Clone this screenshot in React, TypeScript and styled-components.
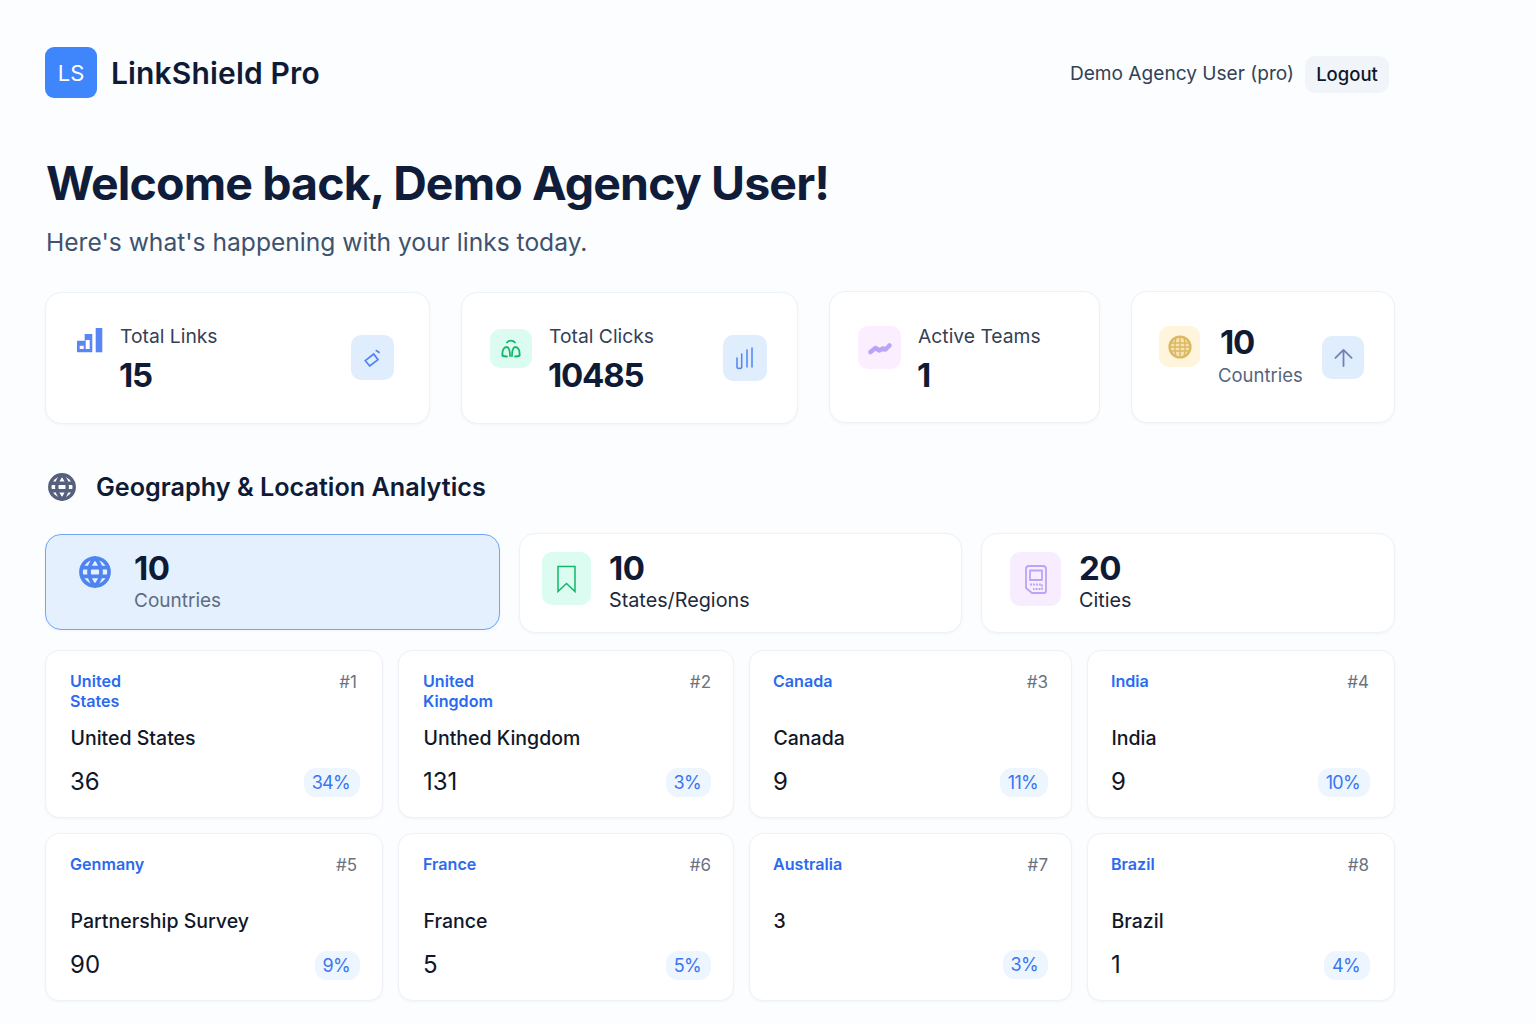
import React from "react";
import styled, { createGlobalStyle } from "styled-components";

const Global = createGlobalStyle`
  html, body { margin: 0; padding: 0; background: #fbfdff; }
  body { font-family: Inter, "Liberation Sans", sans-serif; color: #0f172a; }
  * { box-sizing: border-box; }
`;

const Page = styled.div`
  width: 1536px;
  height: 1024px;
  overflow: hidden;
  padding: 47px 141px 0 45px;
`;
const Header = styled.header`
  display: flex;
  align-items: center;
  justify-content: space-between;
  height: 52px;
  padding-right: 6px;
`;
const Brand = styled.div`
  display: flex;
  align-items: center;
  gap: 14px;
`;
const Logo = styled.div`
  width: 52px;
  height: 51px;
  margin-bottom: 1px;
  border-radius: 9px;
  background: #3f85fb;
  color: #fff;
  display: flex;
  align-items: center;
  justify-content: center;
  font-size: 22px;
  font-weight: 400;
`;
const BrandName = styled.div`
  font-size: 30px;
  font-weight: 600;
  letter-spacing: 0.15px;
  color: #0f1b35;
`;
const UserBox = styled.div`
  display: flex;
  align-items: center;
  gap: 11px;
`;
const UserName = styled.span`
  font-size: 19.1px;
  color: #334155;
`;
const Logout = styled.button`
  height: 37px;
  width: 84px;
  margin-top: 2px;
  border: 0;
  border-radius: 10px;
  background: #f1f5f9;
  font: 500 18.5px Inter, sans-serif;
  color: #0f172a;
`;
const Title = styled.h1`
  margin: 54px 0 0 1px;
  font-size: 46.5px;
  line-height: 60px;
  font-weight: 700;
  letter-spacing: -0.88px;
  color: #0f1d3a;
`;
const Subtitle = styled.p`
  margin: 12px 0 0 1px;
  font-size: 24.6px;
  line-height: 34px;
  color: #3f526e;
`;
const StatRow = styled.section`
  margin-top: 32px;
  display: grid;
  grid-template-columns: 385px 337px 271px 264px;
  gap: 31px;
  align-items: start;
`;
const Card = styled.div`
  background: #fff;
  border: 1px solid #edf2f8;
  border-radius: 16px;
  box-shadow: 0 1px 3px rgba(15, 23, 42, 0.04);
`;
const StatCard = styled(Card)<{ $pad: string; $drop?: boolean }>`
  height: 132px;
  margin-top: ${(p) => (p.$drop ? 1 : 0)}px;
  padding: ${(p) => p.$pad};
  display: flex;
  align-items: flex-start;
`;
const LeadIcon = styled.div<{ $bg?: string; $size?: number; $h?: number; $gap: number; $top?: number }>`
  flex: none;
  width: ${(p) => p.$size ?? 42}px;
  height: ${(p) => p.$h ?? p.$size ?? 42}px;
  margin-right: ${(p) => p.$gap}px;
  margin-top: ${(p) => p.$top ?? 0}px;
  border-radius: 10px;
  background: ${(p) => p.$bg ?? "transparent"};
  display: flex;
  align-items: center;
  justify-content: center;
`;
const StatText = styled.div`
  flex: 1;
  min-width: 0;
`;
const StatLabel = styled.div`
  font-size: 19.3px;
  line-height: 26px;
  color: #334155;
`;
const StatValue = styled.div`
  margin-top: 5px;
  margin-left: -1px;
  font-size: 33px;
  line-height: 42px;
  font-weight: 700;
  letter-spacing: -1.2px;
  color: #0f1b35;
`;
const SmallValue = styled(StatValue)`
  margin-top: 0;
  margin-left: 1px;
`;
const SoftLabel = styled(StatLabel)`
  margin-top: -1px;
  margin-left: -1px;
  font-size: 18.5px;
  color: #56657c;
`;
const TrailIcon = styled.div<{ $w: number; $h: number; $top: number }>`
  flex: none;
  width: ${(p) => p.$w}px;
  height: ${(p) => p.$h}px;
  margin-top: ${(p) => p.$top}px;
  border-radius: 10px;
  background: #e0edfd;
  display: flex;
  align-items: center;
  justify-content: center;
`;
const SectionHead = styled.div`
  margin-top: 43px;
  display: flex;
  align-items: center;
  gap: 20px;
  padding-left: 3px;
  height: 40px;
`;
const SectionTitle = styled.h2`
  margin: 0;
  font-size: 25.2px;
  font-weight: 600;
  color: #0f1b35;
`;
const GeoRow = styled.section`
  margin-top: 26px;
  display: grid;
  grid-template-columns: 455px 443px 414px;
  gap: 19px;
  align-items: start;
`;
const GeoCard = styled(Card)<{ $active?: boolean; $pad: number }>`
  height: ${(p) => (p.$active ? 96 : 100)}px;
  margin-top: ${(p) => (p.$active ? 1 : 0)}px;
  display: flex;
  align-items: flex-start;
  padding: ${(p) => (p.$active ? 15 : 16)}px 0 0 ${(p) => p.$pad}px;
  background: ${(p) => (p.$active ? "#e4f0fe" : "#fff")};
  border: ${(p) => (p.$active ? "1.5px solid #6fa6f8" : "1px solid #edf2f8")};
`;
const GeoValue = styled.div`
  font-size: 33px;
  line-height: 36px;
  font-weight: 700;
  letter-spacing: -0.6px;
  color: #0f1b35;
`;
const GeoLabel = styled.div<{ $muted?: boolean }>`
  margin-top: ${(p) => (p.$muted ? 2 : 1)}px;
  font-size: ${(p) => (p.$muted ? 19 : 19.8)}px;
  line-height: 26px;
  color: ${(p) => (p.$muted ? "#5f6c80" : "#1e293b")};
`;
const LocationGrid = styled.section`
  margin-top: 17px;
  display: grid;
  grid-template-columns: 338px 336px 323px 308px;
  grid-auto-rows: 168px;
  column-gap: 15px;
  row-gap: 15px;
`;
const LocationCard = styled(Card)<{ $left: number; $right: number }>`
  padding: 20px ${(p) => p.$right}px 0 ${(p) => p.$left}px;
  border-radius: 14px;
`;
const LocTop = styled.div`
  height: 40px;
  display: flex;
  justify-content: space-between;
  align-items: flex-start;
`;
const LocCode = styled.div`
  font-size: 16.1px;
  line-height: 20px;
  font-weight: 600;
  color: #2b6af0;
  max-width: 90px;
`;
const LocRank = styled.div<{ $shift: number }>`
  margin-right: ${(p) => p.$shift}px;
  font-size: 17px;
  line-height: 22px;
  color: #6b7280;
`;
const LocName = styled.div`
  margin-top: 13px;
  margin-left: 0.5px;
  height: 28px;
  font-size: 19.5px;
  line-height: 28px;
  font-weight: 500;
  color: #0f172a;
`;
const LocBottom = styled.div`
  margin-top: 15px;
  display: flex;
  align-items: center;
  justify-content: space-between;
`;
const LocCount = styled.div`
  font-size: 24px;
  line-height: 30px;
  color: #0f172a;
`;
const Pct = styled.div`
  height: 29px;
  padding: 0 10px 0 8px;
  border-radius: 12px;
  background: #edf5ff;
  color: #3b76f0;
  font-size: 18px;
  letter-spacing: -0.7px;
  line-height: 29px;
`;

const Globe = ({ size, color, sw = 2 }: { size: number; color: string; sw?: number }) => (
  <svg width={size} height={size} viewBox="0 0 24 24" fill="none" stroke={color} strokeWidth={sw} strokeLinecap="round" strokeLinejoin="round">
    <circle cx="12" cy="12" r="10.500" />
    <path d="M2.500 8.800h19M2.500 15.200h19" />
    <path d="M12 1.500c3 3 4.500 6.600 4.500 10.500s-1.500 7.500-4.500 10.500c-3-3-4.500-6.600-4.500-10.500s1.500-7.500 4.500-10.500z" />
  </svg>
);

const GridGlobe = () => (
  <svg width="24" height="24" viewBox="0 0 24 24" fill="#f4e3b6" stroke="#dcb85f">
    <circle cx="12" cy="12" r="10.400" strokeWidth="2.400" />
    <g fill="none" strokeWidth="1.400">
      <path d="M2 8h20M2 12h20M2 16h20" />
      <path d="M12 2v20M8 2.500c-1.500 6-1.500 13 0 19M16 2.500c1.500 6 1.500 13 0 19" />
    </g>
  </svg>
);

const icons = {
  bars: (
    <svg width="26" height="25" viewBox="0 0 26 25" fill="#5a86f5">
      <path fillRule="evenodd" d="M0 12.700h7.700V6h7.600v18.300H0zM2.700 21h4v-3.300h-4zM8.700 21h4v-9h-4z" />
      <rect x="18.700" y="0" width="6.600" height="24.300" />
    </svg>
  ),
  tag: (
    <svg width="17" height="18" viewBox="0 0 17 18" fill="none" stroke="#4f84f5" strokeWidth="1.700">
      <path d="M1.300 11.700 9.700 5 14 10.700 5.700 17z" />
      <path d="M11.700 1.300l4 2.400" />
    </svg>
  ),
  scale: (
    <svg width="20" height="20" viewBox="0 0 20 20" fill="none" stroke="#12b76a" strokeWidth="1.800" strokeLinecap="round">
      <path d="M6 3.500C8 1 12 1 14 3.500" />
      <path d="M1.500 16.500C1 11 3 8 5.500 8S9 11.500 9 17M11 17c0-5.500 1-9 3.500-9s4.500 3 4 8.500" />
      <path d="M1.500 16.500c1 1 3 1 4.500 1M18.500 16.500c-1 1-3 1-4.500 1" />
    </svg>
  ),
  signal: (
    <svg width="20" height="23" viewBox="0 0 20 23" fill="none" stroke="#4f84f5" strokeWidth="1.500" strokeLinecap="round">
      <path d="M2 11v9c0 2 4.700 2 4.700 0V7M12 3v17M17 1v19" />
    </svg>
  ),
  trend: (
    <svg width="26" height="14" viewBox="0 0 26 14" fill="none" stroke="#b9a4f5" strokeWidth="4.500" strokeLinejoin="round" strokeLinecap="round">
      <path d="M3.500 11l5-4 4 2.500 3-2 3 1 4-4" />
    </svg>
  ),
  arrow: (
    <svg width="19" height="19" viewBox="0 0 20 20" fill="none" stroke="#7381bb" strokeWidth="1.900" strokeLinecap="round" strokeLinejoin="round">
      <path d="M10 19V2M1.500 10.500 10 2l8.500 8.500" />
    </svg>
  ),
  bookmark: (
    <svg width="19" height="28" viewBox="0 0 19 28" fill="none" stroke="#12b76a" strokeWidth="1.500">
      <path d="M1 1.500h17v25l-8.500-8-8.500 8z" />
    </svg>
  ),
  sim: (
    <svg width="22" height="29" viewBox="0 0 22 29" fill="none" stroke="#b9a4f5" strokeWidth="1.800" strokeLinejoin="round">
      <path d="M4 1h14a3 3 0 0 1 3 3v22a2 2 0 0 1-2 2H7l-6-5V4a3 3 0 0 1 3-3z" />
      <path d="M5 5.500h12V15H5z" />
      <path d="M5 19.500h12v4.500H8" strokeDasharray="2 1" />
    </svg>
  ),
};

const columns = [
  { left: 24, right: 22, shift: 3 },
  { left: 24, right: 22, shift: 0 },
  { left: 23, right: 23, shift: 0 },
  { left: 23, right: 24, shift: 1 },
];

const locations = [
  { code: "United States", rank: 1, name: "United States", count: "36", pct: 34 },
  { code: "United Kingdom", rank: 2, name: "Unthed Kingdom", count: "131", pct: 3 },
  { code: "Canada", rank: 3, name: "Canada", count: "9", pct: 11 },
  { code: "India", rank: 4, name: "India", count: "9", pct: 10 },
  { code: "Genmany", rank: 5, name: "Partnership Survey", count: "90", pct: 9 },
  { code: "France", rank: 6, name: "France", count: "5", pct: 5 },
  { code: "Australia", rank: 7, name: "3", count: "", pct: 3 },
  { code: "Brazil", rank: 8, name: "Brazil", count: "1", pct: 4 },
];

export default function App() {
  return (
    <Page>
      <Global />
      <Header>
        <Brand>
          <Logo>LS</Logo>
          <BrandName>LinkShield Pro</BrandName>
        </Brand>
        <UserBox>
          <UserName>Demo Agency User (pro)</UserName>
          <Logout>Logout</Logout>
        </UserBox>
      </Header>
      <Title>Welcome back, Demo Agency User!</Title>
      <Subtitle>Here's what's happening with your links today.</Subtitle>

      <StatRow>
        <StatCard $drop $pad="30px 35px 0 31px">
          <LeadIcon $size={26} $h={25} $gap={17} $top={5}>{icons.bars}</LeadIcon>
          <StatText>
            <StatLabel>Total Links</StatLabel>
            <StatValue>15</StatValue>
          </StatText>
          <TrailIcon $w={43} $h={45} $top={12}>{icons.tag}</TrailIcon>
        </StatCard>
        <StatCard $drop $pad="30px 30px 0 28px">
          <LeadIcon $size={42} $h={39} $gap={17} $bg="#dcfcf1" $top={6}>{icons.scale}</LeadIcon>
          <StatText>
            <StatLabel>Total Clicks</StatLabel>
            <StatValue>10485</StatValue>
          </StatText>
          <TrailIcon $w={44} $h={46} $top={12}>{icons.signal}</TrailIcon>
        </StatCard>
        <StatCard $pad="31px 30px 0 28px">
          <LeadIcon $size={43} $gap={17} $bg="#fbeefe" $top={3}>{icons.trend}</LeadIcon>
          <StatText>
            <StatLabel>Active Teams</StatLabel>
            <StatValue>1</StatValue>
          </StatText>
        </StatCard>
        <StatCard $pad="29px 30px 0 27px">
          <LeadIcon $size={41} $gap={19} $bg="#fff4dc" $top={5}>
            <GridGlobe />
          </LeadIcon>
          <StatText>
            <SmallValue>10</SmallValue>
            <SoftLabel>Countries</SoftLabel>
          </StatText>
          <TrailIcon $w={42} $h={43} $top={15}>{icons.arrow}</TrailIcon>
        </StatCard>
      </StatRow>

      <SectionHead>
        <Globe size={28} color="#565f7c" sw={2.900} />
        <SectionTitle>Geography &amp; Location Analytics</SectionTitle>
      </SectionHead>

      <GeoRow>
        <GeoCard $active $pad={33}>
          <LeadIcon $size={32} $gap={23} $top={6}>
            <Globe size={32} color="#4f84f0" sw={2.800} />
          </LeadIcon>
          <div>
            <GeoValue>10</GeoValue>
            <GeoLabel $muted>Countries</GeoLabel>
          </div>
        </GeoCard>
        <GeoCard $pad={22}>
          <LeadIcon $size={49} $h={53} $gap={18} $top={2} $bg="#dcfcf1">{icons.bookmark}</LeadIcon>
          <div>
            <GeoValue>10</GeoValue>
            <GeoLabel>States/Regions</GeoLabel>
          </div>
        </GeoCard>
        <GeoCard $pad={28}>
          <LeadIcon $size={51} $h={54} $gap={18} $top={2} $bg="#f8edfe">{icons.sim}</LeadIcon>
          <div>
            <GeoValue>20</GeoValue>
            <GeoLabel>Cities</GeoLabel>
          </div>
        </GeoCard>
      </GeoRow>

      <LocationGrid>
        {locations.map((l, i) => (
          <LocationCard key={l.rank} $left={columns[i % 4].left} $right={columns[i % 4].right}>
            <LocTop>
              <LocCode>{l.code}</LocCode>
              <LocRank $shift={columns[i % 4].shift}>#{l.rank}</LocRank>
            </LocTop>
            <LocName>{l.name}</LocName>
            <LocBottom>
              <LocCount>{l.count}</LocCount>
              <Pct>{l.pct}%</Pct>
            </LocBottom>
          </LocationCard>
        ))}
      </LocationGrid>
    </Page>
  );
}
